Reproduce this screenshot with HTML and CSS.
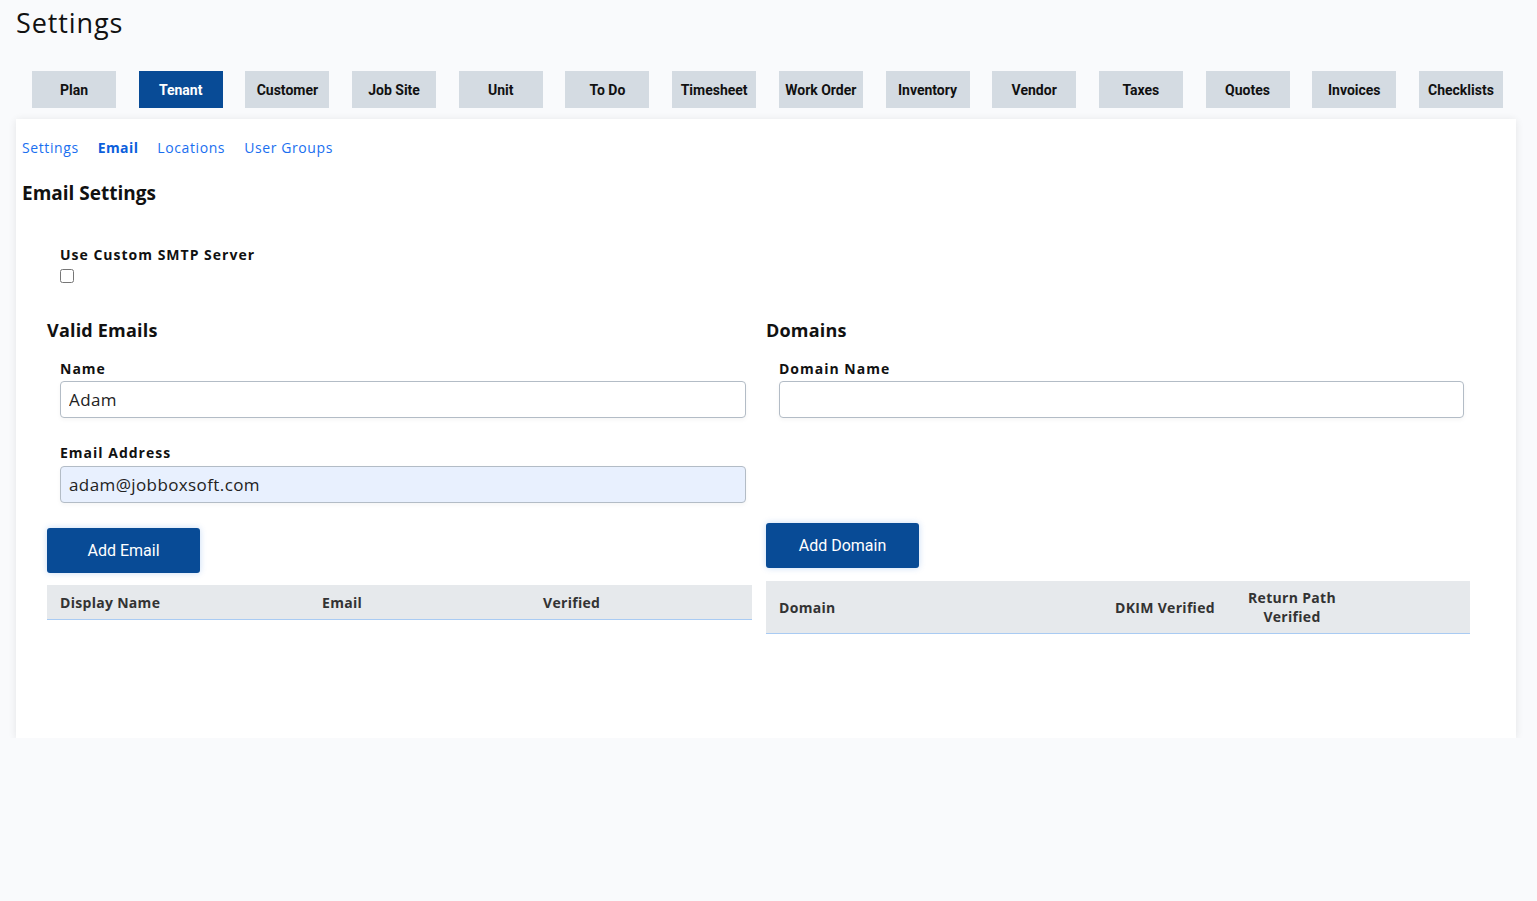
FILE: index.html
```html
<!DOCTYPE html>
<html>
<head>
    <title>Settings</title>
    <link rel="stylesheet" href="styles.css">
</head>
<body>
    <h1 class="page-title">Settings</h1>

    <nav class="tabs">
        <a class="tab">Plan</a>
        <a class="tab active">Tenant</a>
        <a class="tab">Customer</a>
        <a class="tab">Job Site</a>
        <a class="tab">Unit</a>
        <a class="tab">To Do</a>
        <a class="tab">Timesheet</a>
        <a class="tab">Work Order</a>
        <a class="tab">Inventory</a>
        <a class="tab">Vendor</a>
        <a class="tab">Taxes</a>
        <a class="tab">Quotes</a>
        <a class="tab">Invoices</a>
        <a class="tab">Checklists</a>
    </nav>

    <div class="card">
        <div class="subnav">
            <a href="#">Settings</a>
            <a href="#" class="current">Email</a>
            <a href="#">Locations</a>
            <a href="#">User Groups</a>
        </div>

        <h2 class="section-title">Email Settings</h2>

        <div class="smtp">
            <label class="field-label">Use Custom SMTP Server</label>
            <input type="checkbox" class="check">
        </div>

        <div class="columns">
            <div class="col">
                <h3 class="col-title">Valid Emails</h3>
                <div class="field">
                    <label class="field-label">Name</label>
                    <input type="text" class="text-input" value="Adam">
                </div>
                <div class="field second">
                    <label class="field-label">Email Address</label>
                    <input type="text" class="text-input filled" value="adam@jobboxsoft.com">
                </div>
                <button class="btn btn-email">Add Email</button>
                <div class="table-head emails">
                    <span>Display Name</span>
                    <span>Email</span>
                    <span>Verified</span>
                </div>
            </div>

            <div class="col">
                <h3 class="col-title">Domains</h3>
                <div class="field">
                    <label class="field-label">Domain Name</label>
                    <input type="text" class="text-input" value="">
                </div>
                <button class="btn btn-domain">Add Domain</button>
                <div class="table-head domains">
                    <span>Domain</span>
                    <span class="center">DKIM Verified</span>
                    <span class="center">Return Path Verified</span>
                    <span></span>
                </div>
            </div>
        </div>
    </div>
</body>
</html>
```

FILE: styles.css
```css
body { margin: 0; padding: 0 21px 0 16px; background-color: #f9fafc; color: #111; font-family: "Open Sans", "DejaVu Sans", sans-serif; }

.page-title { margin: 0; padding-top: 6px; font-size: 27px; line-height: 34px; font-weight: 500; letter-spacing: 0.9px; }

.tabs { display: flex; gap: 22.7px; margin-top: 31px; padding-left: 16px; }
.tab { width: 84px; height: 37px; display: flex; align-items: center; justify-content: center; background: #d4dbe2; font-family: Roboto, sans-serif; font-weight: 700; font-size: 14px; color: #111; }
.tab.active { background: #084b96; color: #fff; }

.card { margin-top: 11px; height: 619px; background: #fff; box-shadow: 0 1px 8px rgba(0,0,0,0.09); padding: 0 46px 0 6px; box-sizing: border-box; }

.subnav { display: flex; gap: 19px; padding-top: 19px; font-size: 14px; line-height: 20px; letter-spacing: 0.6px; }
.subnav a { color: #1a6ff0; text-decoration: none; }
.subnav a.current { font-weight: 700; color: #0b5fdc; letter-spacing: 0.4px; }

.section-title { margin: 22px 0 0; font-size: 19px; line-height: 26px; font-weight: 700; }

.smtp { margin-top: 40px; padding-left: 38px; display: flex; flex-direction: column; align-items: flex-start; }
.field-label { display: block; font-size: 14px; line-height: 18px; font-weight: 700; color: #111; letter-spacing: 1px; }
.check { margin: 5px 0 0; width: 14px; height: 14px; }

.columns { display: grid; grid-template-columns: 705px 704px; gap: 14px; margin-top: 35px; padding-left: 25px; }
.col { display: flex; flex-direction: column; align-items: flex-start; }
.col-title { margin: 0; font-size: 18px; line-height: 24px; font-weight: 700; letter-spacing: 0.2px; }

.field { align-self: stretch; padding: 0 6px 0 13px; margin-top: 18px; }
.field.second { margin-top: 26px; }
.field .field-label { margin-bottom: 3px; }
.field.second .field-label { margin-bottom: 4px; }
.text-input { width: 100%; box-sizing: border-box; height: 37px; border: 1px solid #b3bcc6; border-radius: 4px; padding: 0 8px; font-family: "Open Sans", "DejaVu Sans", sans-serif; font-size: 17px; letter-spacing: 0.4px; color: #222; background: #fff; box-shadow: 0 2px 4px rgba(0,0,0,0.04); }
.text-input.filled { background: #e8f0fe; }

.btn { width: 153px; height: 45px; border: none; border-radius: 3px; background: #084b96; color: #fff; font-family: Roboto, sans-serif; font-size: 16px; box-shadow: 0 0 6px rgba(30,110,220,0.25); }
.btn-email { margin-top: 25px; }
.btn-domain { margin-top: 105px; }

.table-head { align-self: stretch; display: grid; align-items: center; background: #e6e9ec; border-bottom: 1px solid #a9cbf3; font-size: 14px; font-weight: 700; color: #333; letter-spacing: 0.3px; }
.table-head span { padding: 0 13px; }
.table-head .center { text-align: center; }
.table-head.emails { margin-top: 12px; height: 34px; grid-template-columns: 262px 221px 1fr; }
.table-head.domains { margin-top: 13px; height: 52px; grid-template-columns: 336px 126px 128px 1fr; }
```
